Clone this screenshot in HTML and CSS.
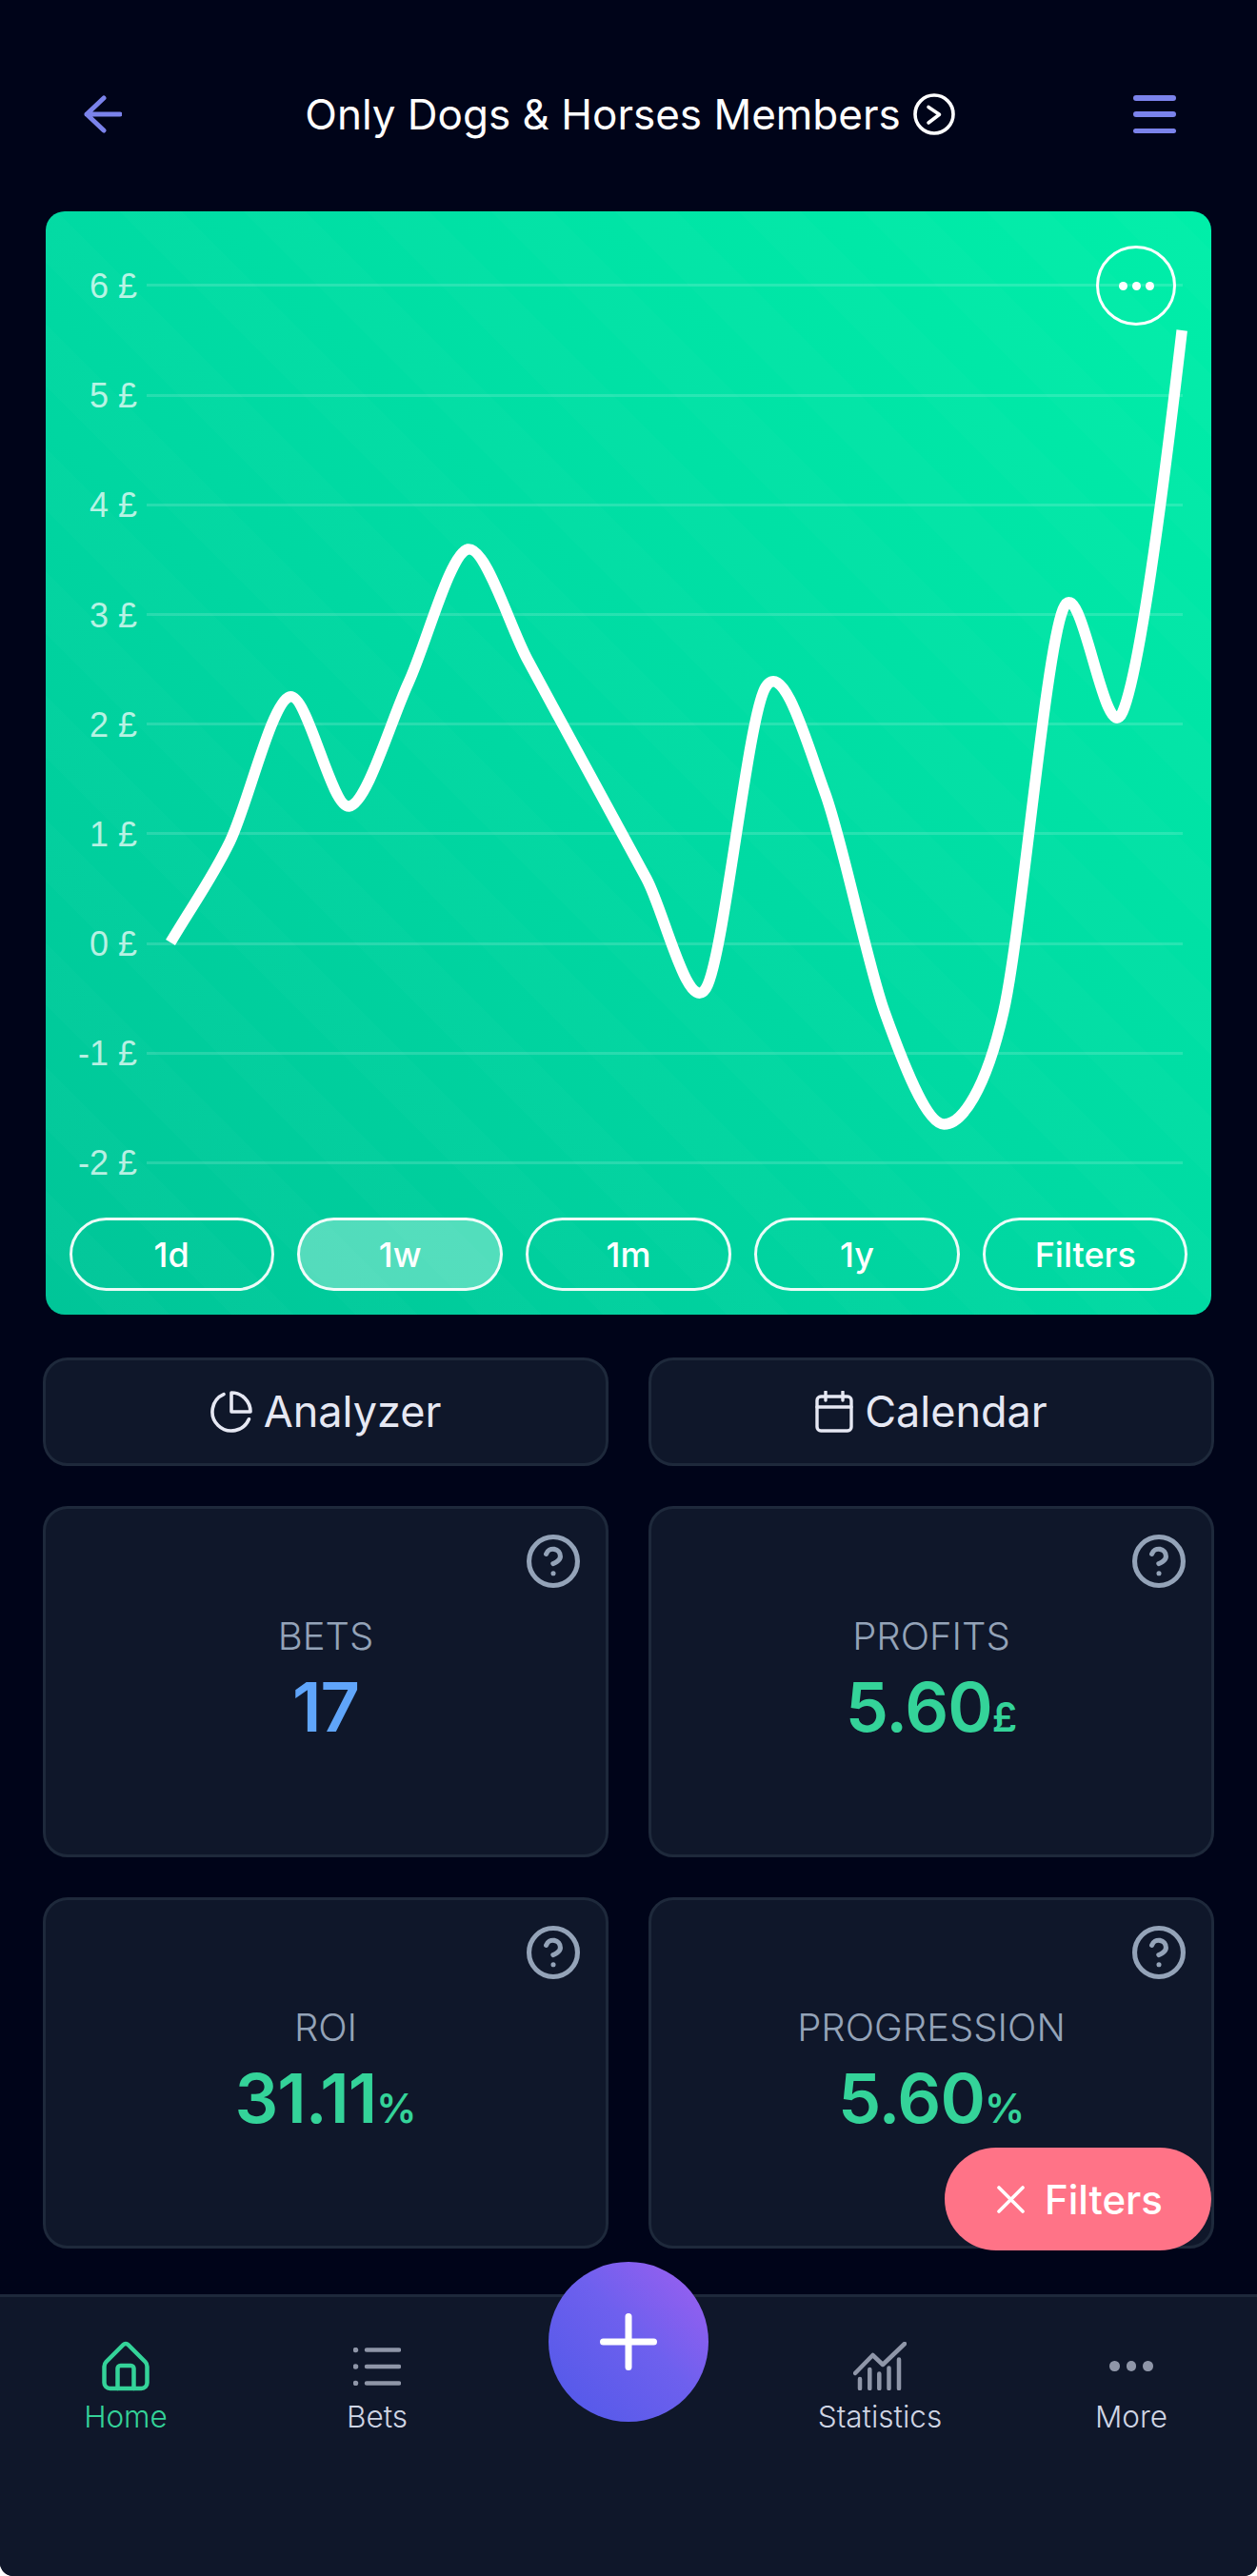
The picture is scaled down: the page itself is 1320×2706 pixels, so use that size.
FILE: index.html
```html
<!DOCTYPE html>
<html lang="en">
<head>
<meta charset="utf-8">
<title>Only Dogs &amp; Horses Members</title>
<link rel="stylesheet" href="styles.css">
</head>
<body>
<div class="app">
  <header class="topbar">
    <svg class="back" viewBox="0 0 40 40"><path d="M38 20H3M21 3 3 20l18 17"/></svg>
    <div class="title">
      <span>Only Dogs &amp; Horses Members</span>
      <svg class="title-icon" viewBox="0 0 44 44"><circle cx="22" cy="22" r="20"/><path d="M16 14.5l11.5 7.800L16 31"/></svg>
    </div>
    <div class="burger"><i></i><i></i><i></i></div>
  </header>

  <section class="chart-card">
    <div class="chart-rows">
      <div class="row"><span class="tick">6 £</span><i class="rule"></i></div>
      <div class="row"><span class="tick">5 £</span><i class="rule"></i></div>
      <div class="row"><span class="tick">4 £</span><i class="rule"></i></div>
      <div class="row"><span class="tick">3 £</span><i class="rule"></i></div>
      <div class="row"><span class="tick">2 £</span><i class="rule"></i></div>
      <div class="row"><span class="tick">1 £</span><i class="rule"></i></div>
      <div class="row"><span class="tick">0 £</span><i class="rule"></i></div>
      <div class="row"><span class="tick">-1 £</span><i class="rule"></i></div>
      <div class="row"><span class="tick">-2 £</span><i class="rule"></i></div>
    </div>
    <svg class="curve" viewBox="48 222 1224 1159">
      <path d="M179 990C204 948 222.75 922.7 241.5 884C260.25 845.3 285.25 737.6 304 732C322.75 726.4 347.75 849.3 366.5 847C385.25 844.7 410.25 757.5 429 717C447.75 676.5 472.65 580.6 491.4 577C510.15 573.4 535.25 658.3 554 693C572.75 727.7 597.65 773.5 616.4 808C635.15 842.5 660.15 888.5 678.9 923C697.65 957.5 722.65 1068.2 741.4 1038C760.15 1007.8 785.15 752.8 803.9 722C822.65 691.2 847.65 781.8 866.4 833C885.15 884.2 910.15 1010.8 928.9 1063C947.65 1115.2 972.55 1181 991.3 1181C1010.05 1181 1035.05 1145.4 1053.8 1063C1072.55 980.6 1097.55 686.7 1116.3 640C1135.05 593.3 1160.05 790.8 1178.8 748C1197.55 705.2 1222.45 509 1241.2 347"/>
    </svg>
    <button class="dots-btn"><i></i><i></i><i></i></button>
    <div class="ranges">
      <span class="pill">1d</span>
      <span class="pill pill-on">1w</span>
      <span class="pill">1m</span>
      <span class="pill">1y</span>
      <span class="pill">Filters</span>
    </div>
  </section>

  <div class="grid actions">
    <div class="panel action">
      <svg class="action-icon" viewBox="1 1 22 22"><path d="M21.21 15.89A10 10 0 1 1 8 2.83"/><path d="M22 12A10 10 0 0 0 12 2v10z"/></svg>
      <span>Analyzer</span>
    </div>
    <div class="panel action">
      <svg class="cal-icon" viewBox="0 0 40 44"><rect x="2" y="6" width="36" height="36" rx="4"/><path d="M2 17h36M11 1v9M29 1v9"/></svg>
      <span>Calendar</span>
    </div>
  </div>

  <div class="grid stats">
    <div class="panel stat">
      <svg class="help" viewBox="1 1 22 22"><circle cx="12" cy="12" r="10"/><path d="M9.09 9a3 3 0 0 1 5.83 1c0 2-3 3-3 3M12 17h.01"/></svg>
      <div class="stat-label">BETS</div>
      <div class="stat-value blue">17</div>
    </div>
    <div class="panel stat">
      <svg class="help" viewBox="1 1 22 22"><circle cx="12" cy="12" r="10"/><path d="M9.09 9a3 3 0 0 1 5.83 1c0 2-3 3-3 3M12 17h.01"/></svg>
      <div class="stat-label">PROFITS</div>
      <div class="stat-value">5.60<small>£</small></div>
    </div>
    <div class="panel stat">
      <svg class="help" viewBox="1 1 22 22"><circle cx="12" cy="12" r="10"/><path d="M9.09 9a3 3 0 0 1 5.83 1c0 2-3 3-3 3M12 17h.01"/></svg>
      <div class="stat-label">ROI</div>
      <div class="stat-value">31.11<small>%</small></div>
    </div>
    <div class="panel stat">
      <svg class="help" viewBox="1 1 22 22"><circle cx="12" cy="12" r="10"/><path d="M9.09 9a3 3 0 0 1 5.83 1c0 2-3 3-3 3M12 17h.01"/></svg>
      <div class="stat-label">PROGRESSION</div>
      <div class="stat-value">5.60<small>%</small></div>
    </div>
  </div>

  <button class="filters-fab">
    <svg viewBox="0 0 29 29"><path d="M2 2l25 25M27 2 2 27"/></svg>
    <span>Filters</span>
  </button>

  <nav class="tabbar">
    <div class="tab tab-on">
      <div class="tab-icon"><svg width="50" height="53" viewBox="0 0 50 53"><path d="M22.5 4a3.5 3.5 0 0 1 5 0L45.5 22Q47.5 24 47.5 27V44a6 6 0 0 1-6 6H8.500a6 6 0 0 1-6-6V27Q2.500 24 4.500 22Z"/><path d="M16.500 50V29a3 3 0 0 1 3-3h11a3 3 0 0 1 3 3V50"/></svg></div>
      <span>Home</span>
    </div>
    <div class="tab">
      <div class="tab-icon"><svg width="50" height="40" viewBox="0 0 50 40"><path d="M2.500 2.600h.01M2.500 20h.01M2.500 37.400h.01" class="bullets"/><path d="M14 2.600h34M14 20h34M14 37.400h34"/></svg></div>
      <span>Bets</span>
    </div>
    <div class="tab tab-gap"></div>
    <div class="tab">
      <div class="tab-icon"><svg width="56" height="51" viewBox="0 0 56 51"><path d="M2 33 20.500 14 31 24 54 2M7 39v10M17.300 29v20M27.300 33.500V49M37.500 27.500V49M48 18.500V49"/></svg></div>
      <span>Statistics</span>
    </div>
    <div class="tab">
      <div class="tab-icon"><div class="more"><i></i><i></i><i></i></div></div>
      <span>More</span>
    </div>
    <button class="plus"><svg viewBox="0 0 60 60"><path d="M3.500 30h53M30 3.500v53"/></svg></button>
  </nav>
</div>
</body>
</html>
```

FILE: styles.css
```css
* { box-sizing: border-box; }
html, body { margin: 0; padding: 0; background: #fff; }
body { font-family: Inter, "Liberation Sans", sans-serif; }
button { font: inherit; padding: 0; border: 0; }

.app {
  position: relative;
  width: 1320px;
  height: 2706px;
  display: flex;
  flex-direction: column;
  overflow: hidden;
  background: #000419;
  border-radius: 0 0 14px 14px;
}

/* header */
.topbar {
  display: grid;
  grid-template-columns: 1fr auto 1fr;
  align-items: center;
  height: 44px;
  margin: 98px 85px 80px 88px;
}
.back { width: 40px; height: 40px; fill: none; stroke: #7b83eb; stroke-width: 5; stroke-linecap: round; stroke-linejoin: round; }
.title { display: flex; align-items: center; gap: 13px; color: #fff; font-size: 44px; line-height: 44px; font-weight: 400; white-space: nowrap; }
.title-icon { width: 44px; height: 44px; fill: none; stroke: #fff; stroke-width: 3.600; stroke-linecap: round; stroke-linejoin: round; }
.burger { justify-self: end; width: 45px; height: 40px; display: flex; flex-direction: column; justify-content: space-between; }
.burger i { display: block; height: 5.500px; border-radius: 3px; background: #7b83eb; }

/* chart card */
.chart-card {
  position: relative;
  height: 1159px;
  margin: 0 48px;
  padding-top: 20.400px;
  border-radius: 20px;
  overflow: hidden;
  background:
    repeating-linear-gradient(45deg, rgba(255,255,255,0) 0 46px, rgba(255,255,255,.015) 46px 92px),
    linear-gradient(to bottom left, #00efa9 0%, #00daa3 50%, #00c598 100%);
}
.chart-rows { display: flex; flex-direction: column; }
.row {
  height: 115.200px;
  display: grid;
  grid-template-columns: 96px 1fr;
  column-gap: 10px;
  align-items: center;
  padding-right: 30.400px;
}
.tick { text-align: right; color: rgba(255,255,255,.72); font-family: "Liberation Sans", Arial, sans-serif; font-size: 36px; line-height: 38px; padding-top: 2px; white-space: nowrap; }
.rule { display: block; height: 3px; background: rgba(255,255,255,.15); }
.curve { position: absolute; left: 0; top: 0; width: 100%; height: 100%; fill: none; stroke: #fff; stroke-width: 11.500; }
.dots-btn {
  position: absolute;
  top: 36px;
  right: 37px;
  width: 84px;
  height: 84px;
  display: flex;
  align-items: center;
  justify-content: center;
  gap: 5px;
  background: transparent;
  border: 3px solid #fff;
  border-radius: 50%;
}
.dots-btn i { width: 9px; height: 9px; border-radius: 50%; background: #fff; }
.ranges { display: grid; grid-template-columns: repeat(5, 1fr); gap: 24.500px; padding: 0 24.500px; }
.pill {
  height: 77px;
  display: flex;
  align-items: center;
  justify-content: center;
  color: #fff;
  font-size: 36px;
  font-weight: 500;
  border: 3px solid rgba(255,255,255,.92);
  border-radius: 39px;
}
.pill-on { background: rgba(255,255,255,.32); }

/* panels */
.grid { display: grid; grid-template-columns: 1fr 1fr; column-gap: 42px; margin: 0 45px; }
.panel { background: #0f172a; border: 3px solid #1e293b; border-radius: 26px; }
.actions { margin-top: 45px; }
.action { height: 114px; display: flex; align-items: center; justify-content: center; gap: 12px; color: #e6e8f3; font-size: 45px; line-height: 50px; font-weight: 400; }
.action-icon { width: 44px; height: 44px; fill: none; stroke: #e6e8f3; stroke-width: 1.800; stroke-linecap: round; stroke-linejoin: round; }
.cal-icon { width: 40px; height: 44px; fill: none; stroke: #e6e8f3; stroke-width: 3.400; stroke-linecap: round; stroke-linejoin: round; }

.stats { margin-top: 42px; row-gap: 42px; }
.stat { position: relative; height: 369px; padding-top: 110px; text-align: center; }
.help { position: absolute; top: 27px; right: 27px; width: 56px; height: 56px; fill: none; stroke: #94a3b8; stroke-width: 2; stroke-linecap: round; stroke-linejoin: round; }
.stat-label { color: #94a3b8; font-size: 40px; font-weight: 300; line-height: 48px; }
.stat-value { color: #34d399; font-size: 72px; font-weight: 600; line-height: 86px; margin-top: 7px; letter-spacing: -1px; }
.stat-value small { font-size: 42px; font-weight: 600; letter-spacing: 0; }
.blue { color: #60a5fa; }

.filters-fab {
  position: absolute;
  left: 992px;
  top: 2256px;
  width: 280px;
  height: 108px;
  padding-left: 4px;
  display: flex;
  align-items: center;
  justify-content: center;
  gap: 21px;
  color: #fff;
  font-size: 42px;
  font-weight: 500;
  background: #ff7387;
  border-radius: 54px;
}
.filters-fab svg { width: 29px; height: 29px; fill: none; stroke: #fff; stroke-width: 3.600; stroke-linecap: round; }

/* tab bar */
.tabbar {
  position: relative;
  margin-top: auto;
  height: 296px;
  padding-top: 46px;
  display: grid;
  grid-template-columns: repeat(5, 264px);
  align-items: start;
  background: #0f172a;
  border-top: 3px solid #1e293b;
}
.tab { display: flex; flex-direction: column; align-items: center; gap: 7px; color: #cfd5e4; font-size: 31.500px; font-weight: 300; }
.tab-on { color: #34d399; }
.tab-icon { height: 53px; display: flex; align-items: center; justify-content: center; }
.tab-icon svg { fill: none; stroke: #8f96a8; stroke-width: 4.500; stroke-linecap: round; stroke-linejoin: round; }
.tab-on .tab-icon svg { stroke: #34d399; }
.tab-icon .bullets { stroke-width: 5.500; }
.more { display: flex; gap: 7px; }
.more i { width: 10.500px; height: 10.500px; border-radius: 50%; background: #8f96a8; }
.plus {
  position: absolute;
  left: 576px;
  top: -37px;
  width: 168px;
  height: 168px;
  display: flex;
  align-items: center;
  justify-content: center;
  border-radius: 50%;
  background: linear-gradient(to bottom left, #a05ff0 0%, #6e60ee 45%, #4f58e8 100%);
}
.plus svg { width: 60px; height: 60px; fill: none; stroke: #fff; stroke-width: 7; stroke-linecap: round; }
```
